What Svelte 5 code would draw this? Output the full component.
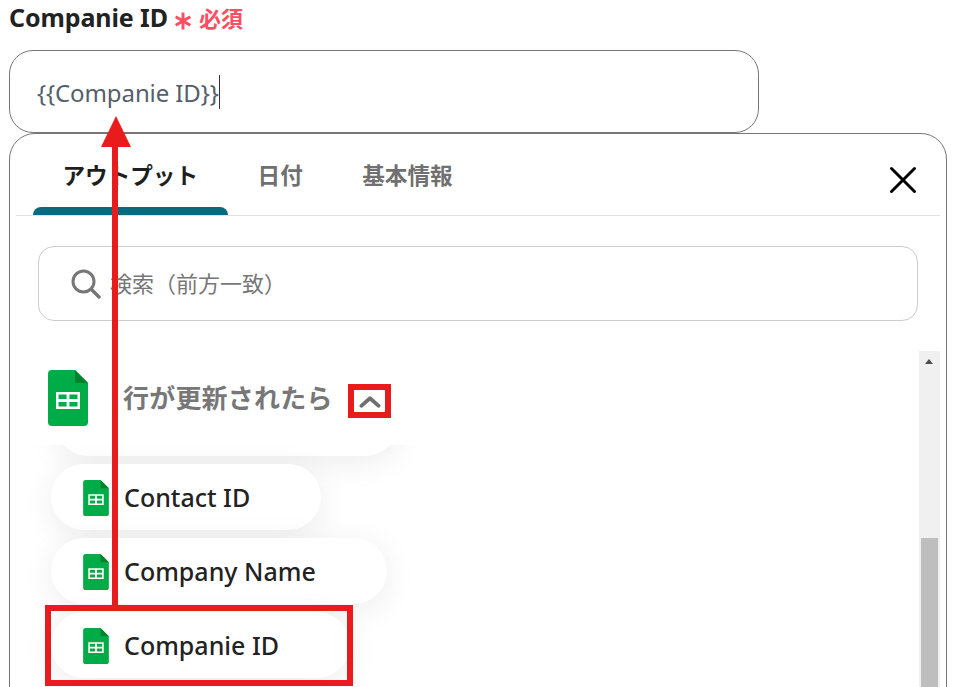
<script lang="ts">
  const tabs = ['アウトプット', '日付', '基本情報'];
  const items = ['Contact ID', 'Company Name', 'Companie ID'];
</script>

{#snippet sheet(cls: string)}
  <svg class={cls} viewBox="0 0 40 56" aria-hidden="true">
    <path d="M4 0H27L40 13V52a4 4 0 0 1-4 4H4a4 4 0 0 1-4-4V4a4 4 0 0 1 4-4z" fill="#00ac47" />
    <path d="M27 0L40 13H27z" fill="#00832d" />
    <path d="M8 22H32V39H8zM10.5 24.5V29H18.6V24.5zM21.4 24.5V29H29.5V24.5zM10.5 32V36.5H18.6V32zM21.4 32V36.5H29.5V32z" fill="#fff" fill-rule="evenodd" />
  </svg>
{/snippet}

<div class="page">
  <div class="label">
    <span class="name">Companie ID</span>
    <svg class="star" viewBox="0 0 16 16" aria-hidden="true">
      <path d="M8 0.5V15.5M1.5 4.2L14.5 11.8M14.5 4.2L1.5 11.8" stroke="#ff4d63" stroke-width="2.6" fill="none" />
    </svg>
    <span class="req">必須</span>
  </div>

  <div class="field"><span class="value">{'{{Companie ID}}'}</span><i class="caret"></i></div>

  <div class="panel">
    <div class="tabs">
      {#each tabs as t, i}
        <div class="tab" class:active={i === 0}>{t}</div>
      {/each}
      <svg class="close" viewBox="0 0 28 28" aria-hidden="true">
        <path d="M2.5 2.5L25.5 25.5M25.5 2.5L2.5 25.5" stroke="#000" stroke-width="3" stroke-linecap="round" fill="none" />
      </svg>
    </div>

    <div class="search">
      <svg class="lens" viewBox="0 0 30 30" aria-hidden="true">
        <circle cx="12.5" cy="12.5" r="10.5" stroke="#777" stroke-width="3" fill="none" />
        <path d="M20.5 20.5L28 28" stroke="#777" stroke-width="3.4" stroke-linecap="round" />
      </svg>
      <span>検索（前方一致）</span>
    </div>

    <div class="body">
      <div class="list">
        <div class="group">
          {@render sheet('big')}
          <span class="title">行が更新されたら</span>
          <svg class="chev" viewBox="0 0 20 12" aria-hidden="true">
            <path d="M2 10L10 3L18 10" stroke="#6f6f6f" stroke-width="3.4" stroke-linecap="round" stroke-linejoin="round" fill="none" />
          </svg>
        </div>
        <div class="pills">
          <div class="sliver"></div>
          {#each items as it}
            <div class="pill">{@render sheet('small')}<span>{it}</span></div>
          {/each}
        </div>
      </div>
      <div class="scroll">
        <i class="up"></i>
        <div class="thumb"></div>
      </div>
    </div>
  </div>

  <!-- annotations drawn over the screenshot -->
  <div class="marks">
    <div class="arrow-line"></div>
    <div class="arrow-head"></div>
    <div class="box chev-box"></div>
    <div class="box row-box"></div>
  </div>
</div>

<style>
  :global(body) {
    background: #fff;
  }
  .page {
    position: relative;
    width: 956px;
    height: 687px;
    padding: 0 9px;
    box-sizing: border-box;
    overflow: hidden;
    font-family: "Noto Sans", "Noto Sans CJK JP", sans-serif;
    background: #fff;
  }
  .label {
    display: flex;
    align-items: center;
    height: 50px;
    padding-bottom: 16px;
    box-sizing: border-box;
  }
  .name {
    font-size: 25px;
    font-weight: 700;
    color: #222;
    letter-spacing: -0.1px;
  }
  .star {
    width: 18px;
    height: 18px;
    margin: 7px 7px 0 6px;
  }
  .req {
    font-size: 22px;
    font-weight: 700;
    color: #ff4d63;
    margin-top: -1px;
  }
  .field {
    display: flex;
    align-items: center;
    width: 750px;
    height: 83px;
    box-sizing: border-box;
    padding: 2px 0 0 27px;
    border: 1px solid #777;
    border-radius: 24px;
    font-size: 24px;
    letter-spacing: -0.1px;
    color: #555e6b;
  }
  .caret {
    width: 1px;
    height: 34px;
    margin-top: -2px;
    background: #333;
  }
  .panel {
    height: 620px;
    box-sizing: border-box;
    border: 1px solid #777;
    border-radius: 26px;
    padding: 0 6px;
  }
  .tabs {
    position: relative;
    display: flex;
    height: 81px;
    padding-left: 17px;
    border-bottom: 1px solid #e2e2e2;
  }
  .tab {
    position: relative;
    display: flex;
    align-items: center;
    justify-content: center;
    padding: 0 30px 0 29.5px;
    font-size: 22.6px;
    font-weight: 700;
    color: #707070;
  }
  .tab.active {
    color: #1f1f1f;
  }
  .tab.active::after {
    content: '';
    position: absolute;
    left: 0;
    right: 0;
    bottom: 0;
    height: 8px;
    border-radius: 8px 8px 0 0;
    background: #066a80;
  }
  .close {
    position: absolute;
    right: 23px;
    top: 32px;
    width: 28px;
    height: 28px;
  }
  .search {
    display: flex;
    align-items: center;
    gap: 9px;
    height: 75px;
    box-sizing: border-box;
    margin: 30px 22px 30px 22px;
    padding: 0 0 3px 32px;
    border: 1px solid #ccc;
    border-radius: 16px;
    font-size: 22px;
    color: #777;
  }
  .lens {
    width: 30px;
    height: 30px;
    margin-top: 3px;
  }
  .body {
    display: flex;
    height: 340px;
  }
  .list {
    flex: 1;
    min-width: 0;
  }
  .group {
    position: relative;
    z-index: 1;
    display: flex;
    align-items: center;
    height: 94px;
    padding-left: 32px;
    background: #fff;
  }
  .big {
    width: 40px;
    height: 56px;
    flex: none;
  }
  .title {
    margin: -3px 0 0 35px;
    font-size: 26px;
    letter-spacing: 0.2px;
    font-weight: 700;
    color: #777;
  }
  .chev {
    width: 22px;
    height: 13px;
    margin: 6px 0 0 26px;
  }
  .pills {
    display: flex;
    flex-direction: column;
    align-items: flex-start;
    gap: 8px;
    padding-left: 35px;
    margin-top: -55px;
  }
  .sliver {
    width: 343px;
    height: 66px;
    margin-left: 4px;
    border-radius: 33px;
    background: #fff;
    box-shadow: 0 6px 32px rgba(0, 0, 0, 0.08);
  }
  .pill {
    display: flex;
    align-items: center;
    gap: 15px;
    height: 66px;
    box-sizing: border-box;
    padding: 0 71px 0 32px;
    border-radius: 33px;
    background: #fff;
    box-shadow: 0 6px 32px rgba(0, 0, 0, 0.08);
    font-size: 25px;
    font-weight: 500;
    color: #222;
  }
  .small {
    width: 26px;
    height: 36px;
    flex: none;
    margin-top: 2px;
  }
  .scroll {
    position: relative;
    width: 21px;
    flex: none;
    background: #f0f0f0;
  }
  .up {
    position: absolute;
    left: 6px;
    top: 8px;
    border-left: 4.5px solid transparent;
    border-right: 4.5px solid transparent;
    border-bottom: 5px solid #4d4d4d;
  }
  .thumb {
    position: absolute;
    left: 2px;
    right: 2px;
    top: 187px;
    bottom: 0;
    background: #bebebe;
  }
  .marks {
    position: absolute;
    inset: 0;
    z-index: 2;
    pointer-events: none;
  }
  .arrow-line {
    position: absolute;
    left: 112px;
    top: 140px;
    width: 6px;
    height: 466px;
    background: #e81c1c;
  }
  .arrow-head {
    position: absolute;
    left: 101px;
    top: 116px;
    border-left: 15.5px solid transparent;
    border-right: 15.5px solid transparent;
    border-bottom: 31px solid #e81c1c;
  }
  .box {
    position: absolute;
    box-sizing: border-box;
    border: 6px solid #e81c1c;
  }
  .chev-box {
    left: 348px;
    top: 384px;
    width: 43px;
    height: 34px;
  }
  .row-box {
    left: 45px;
    top: 605px;
    width: 308px;
    height: 81px;
  }
</style>
